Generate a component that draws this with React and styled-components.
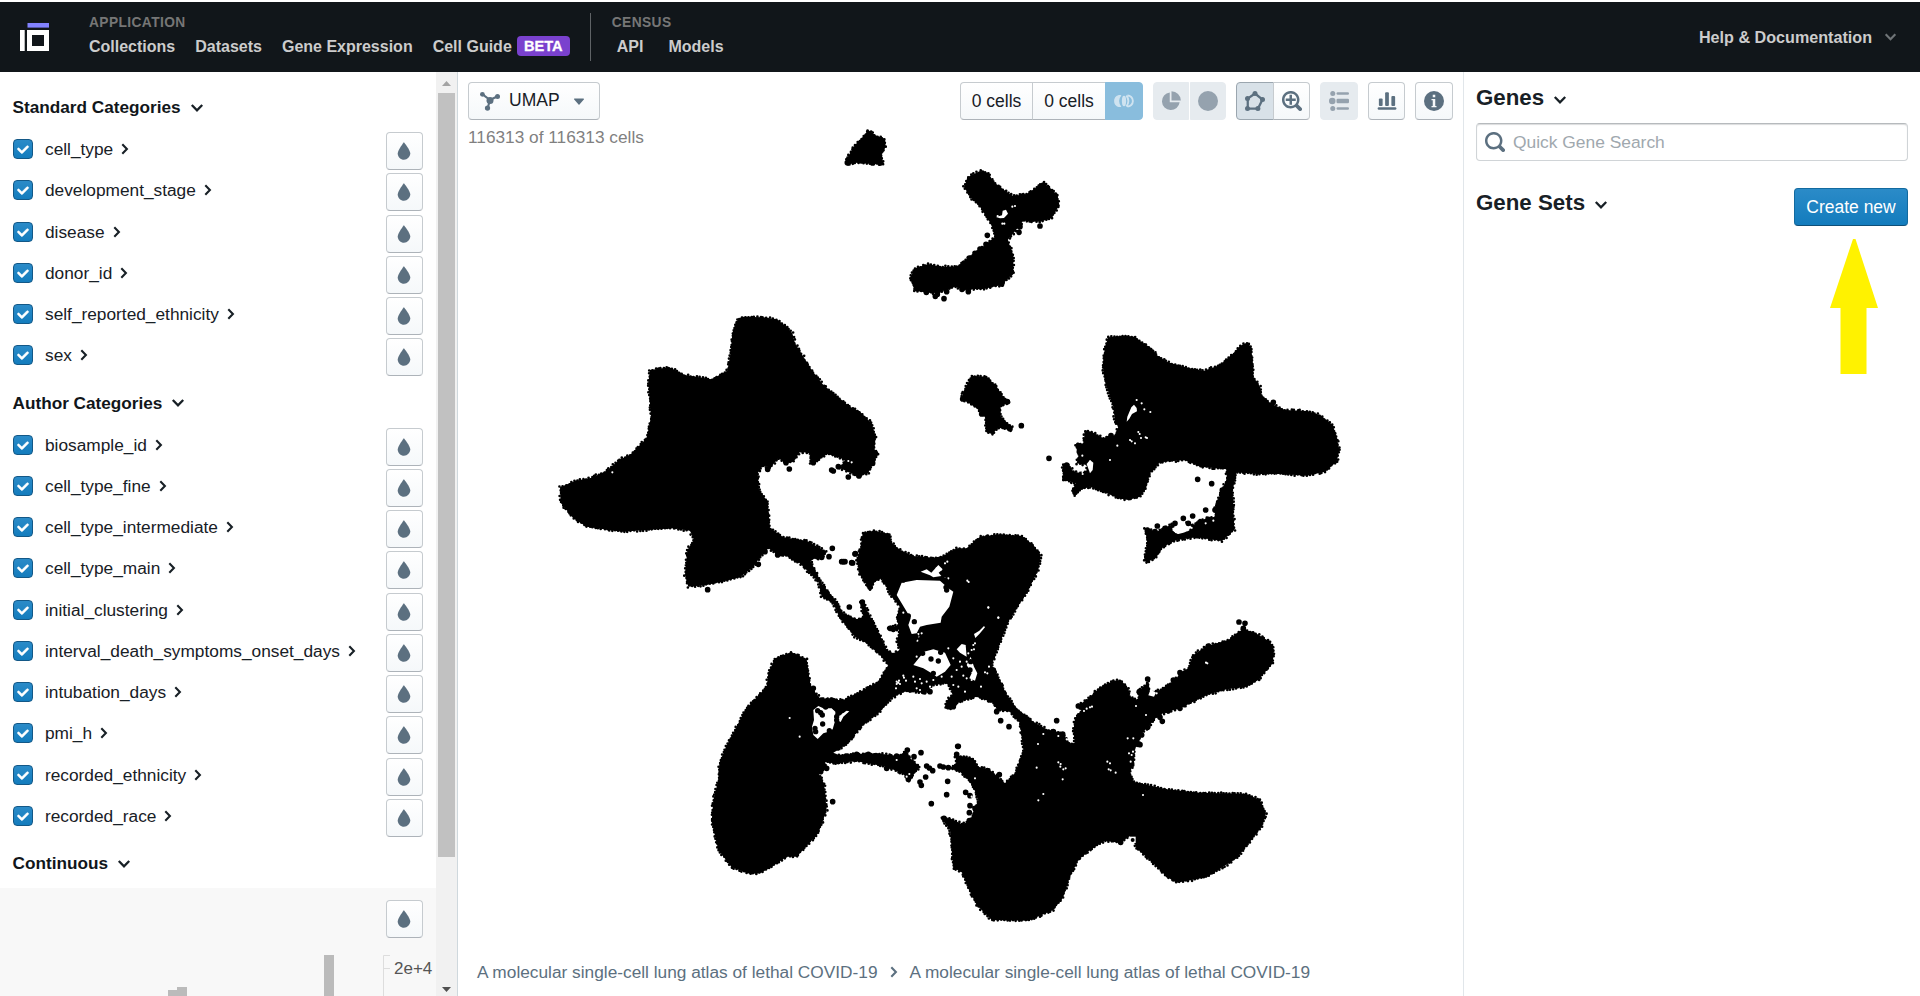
import React from "react";
import styled, { createGlobalStyle, css } from "styled-components";

const GlobalStyle = createGlobalStyle`
  * { box-sizing: border-box; }
  body { margin: 0; background: #fff; overflow: hidden; }
  body, button { font-family: "Liberation Sans", Arial, sans-serif; font-size: 17.5px; color: #182026; }
`;

const Page = styled.div`
  height: 996px;
  padding-top: 2px;
  display: flex;
  flex-direction: column;
`;

/* ---------- header ---------- */
const Header = styled.header`
  height: 70px;
  flex: none;
  background: #11161a;
  display: flex;
  padding-left: 20px;
  padding-right: 23px;
`;
const LogoSvg = styled.svg`
  width: 29px;
  height: 28px;
  margin: 21px 40px 0 0;
`;
const NavSection = styled.div`
  display: flex;
  flex-direction: column;
  padding-top: 13px;
`;
const NavTitle = styled.div`
  font-size: 13.75px;
  line-height: 16px;
  font-weight: 700;
  letter-spacing: 0.4px;
  color: #767676;
`;
const NavLinks = styled.div`
  display: flex;
  align-items: center;
  gap: ${(p) => p.$gap || 20}px;
  padding-left: ${(p) => p.$indent || 0}px;
  margin-top: 6px;
  height: 20px;
`;
const NavLink = styled.a`
  font-size: 16px;
  line-height: 20px;
  font-weight: 700;
  color: #ccc;
  white-space: nowrap;
  display: flex;
  align-items: center;
`;
const Beta = styled.span`
  margin: -2px 0 0 5px;
  width: 53px;
  height: 20px;
  border-radius: 4px;
  background: #7a41ce;
  color: #fff;
  font-size: 14.6px;
  line-height: 20px;
  -webkit-text-stroke: 0.3px #fff;
  text-align: center;
`;
const NavDivider = styled.div`
  width: 1px;
  height: 48px;
  margin: 11px 21px 0 20px;
  background: #5f6366;
`;
const Help = styled.div`
  margin-left: auto;
  display: flex;
  align-items: center;
  gap: 12px;
  height: 70px;
  font-size: 16.15px;
  font-weight: 700;
  color: #ccc;
`;

/* ---------- body ---------- */
const Body = styled.div`
  flex: 1;
  min-height: 0;
  display: flex;
`;
const Sidebar = styled.aside`
  width: 436px;
  flex: none;
  overflow: hidden;
  padding-top: 12px;
`;
const SectionTitle = styled.h2`
  margin: 0;
  height: 48px;
  padding: 0 0 1px 12.5px;
  display: flex;
  align-items: center;
  gap: 9px;
  font-size: 17.2px;
  font-weight: 700;
  color: #11161a;
`;
const Row = styled.div`
  height: 41.25px;
  padding: 0 13px;
  display: flex;
  align-items: flex-start;
`;
const Checkbox = styled.span`
  width: 20px;
  height: 20px;
  margin: 7px 12px 0 0;
  border-radius: 4px;
  border: 1px solid #135887;
  background: linear-gradient(#2b8bc8, #137cbd);
  display: flex;
  align-items: center;
  justify-content: center;
`;
const RowLabel = styled.span`
  line-height: 34px;
  flex: 1;
  display: flex;
  align-items: center;
  gap: 8px;
  font-size: 17.3px;
`;
const buttonFace = css`
  border: 1px solid #c6cbcf;
  border-bottom-color: #adb3b9;
  background: linear-gradient(#ffffff, #f5f8fa);
`;
const Button = styled.button`
  height: 38px;
  width: ${(p) => p.$w || 38}px;
  padding: 0;
  margin: 0;
  border-radius: 4px;
  display: flex;
  align-items: center;
  justify-content: center;
  color: #182026;
  ${buttonFace}
  ${(p) => p.$active && css`background: #d8e1e8; border-color: #9ba6af;`}
  ${(p) => p.$disabled && css`background: #e6ebef; border-color: #e6ebef;`}
  ${(p) => p.$primaryOff && css`background: #89bddd; border-color: #89bddd;`}
`;
const ColorByButton = styled(Button)`
  width: 37px;
  padding-right: 1px;
`;
const Group = styled.div`
  display: flex;
  & > button + button { border-top-left-radius: 0; border-bottom-left-radius: 0; margin-left: ${(p) => p.$overlap ?? -1}px; }
  & > button:not(:last-child) { border-top-right-radius: 0; border-bottom-right-radius: 0; }
`;
const Histogram = styled.div`
  height: 108px;
  background: #f8f8f8;
  padding: 12px 0 0;
  display: flex;
  flex-direction: column;
`;
const HistogramTools = styled.div`
  display: flex;
  justify-content: flex-end;
  padding-right: 13px;
`;
const HistogramSvg = styled.svg`
  display: block;
  width: 436px;
  height: 58px;
`;
const ScrollTrack = styled.div`
  width: 21px;
  flex: none;
  background: #f1f1f1;
  display: flex;
  flex-direction: column;
  align-items: center;
  justify-content: space-between;
`;
const ScrollThumb = styled.div`
  width: 17px;
  height: 764px;
  background: #c1c1c1;
`;
const ScrollArrow = styled.svg`
  width: 17px;
  height: ${(p) => p.$h}px;
  flex: none;
`;
const Main = styled.main`
  width: 1007px;
  flex: none;
  position: relative;
  border-left: 1px solid #cfd8dd;
  border-right: 1px solid #e1e6ea;
  display: flex;
  flex-direction: column;
`;
const Plot = styled.svg`
  position: absolute;
  inset: 0;
  width: 1005px;
  height: 924px;
`;
const Toolbar = styled.div`
  display: flex;
  gap: 10px;
  padding: 10px 10px 0 10px;
`;
const LayoutButton = styled(Button)`
  width: 132px;
  margin-right: auto;
  justify-content: flex-start;
  padding: 0 0 1px 11px;
  & > span { margin: 0 9px 1px 9px; }
`;
const CellCount = styled.div`
  padding: 7px 0 0 10px;
  line-height: 20px;
  font-size: 17.25px;
  color: #808080;
`;
const Breadcrumbs = styled.nav`
  margin-top: auto;
  padding: 0 0 13px 19px;
  display: flex;
  align-items: center;
  gap: 12px;
  line-height: 22px;
  font-size: 17.3px;
  color: #5c7080;
`;
const GenePanel = styled.aside`
  flex: 1;
  padding: 13px 12px 0 12px;
`;
const PanelTitle = styled.h1`
  margin: 0;
  display: flex;
  align-items: center;
  gap: 9px;
  font-size: 22.3px;
  line-height: 26px;
  font-weight: 700;
  color: #182026;
  & > svg { margin-top: 3px; }
`;
const SearchBox = styled.div`
  margin-top: 12px;
  height: 38px;
  border: 1px solid #d0d4d7;
  border-top-color: #b6babd;
  border-radius: 4px;
  box-shadow: inset 0 1px 1px rgba(16, 22, 26, 0.15);
  display: flex;
  align-items: center;
  gap: 8px;
  padding-left: 8px;
  color: #a0a8ae;
  font-size: 17.4px;
`;
const GeneSetsRow = styled.div`
  margin-top: 27px;
  display: flex;
  justify-content: space-between;
  align-items: flex-start;
  height: 38px;
  & > h1 { padding-top: 2px; }
`;
const CreateButton = styled(Button)`
  width: 114px;
  color: #fff;
  background: linear-gradient(#2b8bc8, #137cbd);
  border-color: #136a9f;
  border-bottom-color: #0f4f78;
  font-size: 17.5px;
`;
const ArrowRow = styled.div`
  display: flex;
  justify-content: flex-end;
  padding: 13px 30px 0 0;
`;

/* ---------- icons ---------- */
const Glyph = ({ children, size = 20, color = "#5c7080" }) => (
  <svg width={size} height={size} viewBox="0 0 16 16" fill={color}>{children}</svg>
);
const Drop = () => (
  <Glyph><path d="M7.88 1s-4.9 6.28-4.9 8.9c.01 2.82 2.34 5.1 4.99 5.1 2.65-.01 5.03-2.3 5.03-5.13C12.99 7.17 7.88 1 7.88 1z" /></Glyph>
);
const Tick = () => (
  <Glyph size={20} color="#fff"><path d="M12 5c-.28 0-.53.11-.71.29L7 9.59l-2.29-2.3a1.003 1.003 0 00-1.42 1.42l3 3c.18.18.43.29.71.29s.53-.11.71-.29l5-5A1.003 1.003 0 0012 5z" stroke="#fff" strokeWidth=".4" /></Glyph>
);
const ChevronRight = ({ color = "#182026" }) => (
  <svg width="8" height="12" viewBox="0 0 8 12" fill="none" stroke={color} strokeWidth="2.1"><path d="M1.3 1.3L5.9 6L1.3 10.7" /></svg>
);
const ChevronDown = ({ color = "#182026", w = 14 }) => (
  <svg width={w} height="10" viewBox="0 0 14 10" fill="none" stroke={color} strokeWidth="2.3"><path d="M1.8 2L7 7.3L12.2 2" /></svg>
);
const Caret = () => (
  <Glyph><path d="M12 6.5c0-.28-.22-.5-.5-.5h-7a.495.495 0 00-.37.83l3.5 4c.09.1.22.17.37.17s.28-.07.37-.17l3.5-4c.08-.09.13-.2.13-.33z" /></Glyph>
);
const GraphIcon = () => (
  <Glyph>
    <path d="M1.8 2.5L8 7.2M14 4.2L8 7.2M6.1 13.8L8 7.2" stroke="#5c7080" strokeWidth="1.7" />
    <circle cx="1.9" cy="2.6" r="1.9" /><circle cx="14" cy="4.4" r="2" /><circle cx="6" cy="13.6" r="2.1" /><circle cx="8" cy="7.6" r="2.8" />
  </Glyph>
);
const Intersect = () => (
  <Glyph color="none">
    <path d="M5.9 3.5C4 2.500.1 4 .1 8s3.900 5.500 5.800 4.500A6.500 6.500 0 015.900 3.500z" fill="#cfe3f0" />
    <ellipse cx="8" cy="8" rx="1.700" ry="4.200" fill="#cfe3f0" />
    <path d="M9.800 3.700a6.300 6.300 0 010 8.600M10.800 3.600c2.200 0 4.300 1.700 4.300 4.400s-2.100 4.400-4.300 4.400" stroke="#cfe3f0" strokeWidth="1.500" />
  </Glyph>
);
const PieIcon = () => (
  <Glyph color="#95a2ae"><path d="M7 1.1A7.1 7.1 0 1014.9 9H7z" /><path d="M8.4 0.2V7.6H15.9A7.5 7.5 0 008.4.2z" /></Glyph>
);
const CircleIcon = () => <Glyph color="#95a2ae"><circle cx="8" cy="8" r="8" /></Glyph>;
const LassoIcon = () => (
  <Glyph>
    <path d="M8 2L14 6.8L10.4 14H2.2V6z" fill="none" stroke="#5c7080" strokeWidth="1.8" />
    <circle cx="8" cy="2" r="2" /><circle cx="14" cy="6.8" r="2" /><circle cx="10.3" cy="14" r="2" /><circle cx="2" cy="14" r="2" /><circle cx="2" cy="6" r="2" />
  </Glyph>
);
const ZoomIcon = () => (
  <Glyph>
    <path d="M15.55 13.43l-2.67-2.68a6.94 6.94 0 001.11-3.76c0-3.87-3.13-7-7-7s-7 3.13-7 7 3.13 7 7 7c1.39 0 2.68-.42 3.76-1.11l2.68 2.67a1.498 1.498 0 102.12-2.12zm-8.56-1.44c-2.76 0-5-2.24-5-5s2.24-5 5-5 5 2.24 5 5-2.24 5-5 5z" />
    <path d="M6 3h2v3h3v2H8v3H6V8H3V6h3z" />
  </Glyph>
);
const SearchIcon = () => (
  <Glyph><path d="M15.55 13.43l-2.67-2.68a6.94 6.94 0 001.11-3.76c0-3.87-3.13-7-7-7s-7 3.13-7 7 3.13 7 7 7c1.39 0 2.68-.42 3.76-1.11l2.68 2.67a1.498 1.498 0 102.12-2.12zm-8.56-1.44c-2.76 0-5-2.24-5-5s2.24-5 5-5 5 2.24 5 5-2.24 5-5 5z" /></Glyph>
);
const LegendIcon = () => (
  <Glyph color="#95a2ae">
    <circle cx="3" cy="2" r="2" /><circle cx="2.6" cy="8" r="2.6" /><circle cx="3" cy="14" r="2" />
    <rect x="6" y="1" width="10" height="2" rx="1" /><rect x="6" y="6.2" width="10" height="3.6" rx="1" /><rect x="6" y="13" width="10" height="2" rx="1" />
  </Glyph>
);
const BarsIcon = () => (
  <Glyph>
    <rect x="1.5" y="6" width="3" height="6" rx=".8" /><rect x="6.5" y="1" width="3" height="11" rx=".8" /><rect x="11.5" y="4" width="3" height="8" rx=".8" /><rect x="0.5" y="13" width="15" height="2" rx="1" />
  </Glyph>
);
const InfoIcon = () => (
  <Glyph>
    <circle cx="8" cy="8" r="8" />
    <path d="M7 3h2v2H7zM6 6.400h3V12h1v1H6v-1h1V7.400H6z" fill="#f7f9fa" />
  </Glyph>
);
const Logo = () => (
  <LogoSvg viewBox="0 0 29 28">
    <rect x="7.5" y="0" width="21.5" height="4.6" fill="#8282ff" />
    <rect x="0" y="7" width="4.7" height="21" fill="#fff" />
    <path d="M7 7h22v21H7zM12 12v11h12V12z" fill="#fff" fillRule="evenodd" />
  </LogoSvg>
);

/* ---------- embedding plot ---------- */
// Each cluster lists outlines, gaps and single cells in thirds of a pixel from its origin.
const clusters = [
  {
    at: [440, 60],
    fill: ["1285,210 1305,225 1335,238 1337,260 1325,285 1330,312 1300,312 1245,308 1222,315 1218,300 1245,255 1265,235"],
    cells: "1222,308 1298,309 1320,309",
  },
  {
    at: [540, 300],
    fill: [
      "60,562 105,543 155,533 200,512 240,478 270,465 320,415 333,350 325,250 330,210 388,202 435,225 515,238 562,212 572,160 577,100 588,65 605,50 670,52 710,58 740,80 757,100 765,130 815,210 850,255 930,320 960,335 995,370 1007,410 1003,450 1015,462 998,492 985,518 955,530 925,515 900,505 915,480 885,468 860,462 830,485 812,492 810,460 780,455 760,485 740,490 715,475 690,505 670,495 653,520 657,570 683,605 690,685 730,712 800,722 860,755 845,775 810,778 790,790 765,785 740,768 715,765 685,745 665,765 640,800 600,832 545,845 500,855 445,860 435,825 442,750 462,720 450,692 400,685 245,695 140,680 100,655 62,608",
    ],
    cells: "503,869 655,793 877,745 867,770 905,785 915,785 935,788 748,507 875,510 880,513 925,531 957,528 945,762 683,508 675,755 668,493 1006,460 998,490 820,488 738,488 895,500 845,772 713,765",
    gaps: "925,483 935,487 217,517",
  },
  {
    at: [880, 110],
    fill: [
      "300,183 325,188 340,215 385,250 400,258 440,252 490,218 515,238 533,258 538,285 515,325 480,335 430,332 400,370 383,390 400,435 400,490 365,525 310,537 245,538 225,530 200,540 160,550 105,543 90,505 105,475 145,462 180,470 230,470 270,440 315,405 345,380 335,345 300,290 270,260 252,230 265,200",
      "275,797 320,800 350,830 370,860 388,875 362,890 362,920 395,950 390,962 360,950 335,972 318,965 315,920 290,895 265,878 245,868 250,845",
    ],
    cells: "322,376 420,350 417,367 480,348 192,566 166,559 172,553 200,545 265,545 246,538 139,547 424,947 305,912 382,875 390,956 248,867 490,225 525,257 252,460 268,444 285,430 300,417 318,403 427,258 393,487 365,522",
    holes: ["348,321 366,316 368,302 378,299 384,311 372,324 360,325"],
    gaps: "397,290 405,288 367,341 373,341 353,318",
  },
  {
    at: [1040, 310],
    fill: [
      "205,82 255,77 285,80 305,97 335,115 350,135 380,155 430,170 490,183 540,165 580,130 600,108 620,98 633,110 640,170 640,200 660,230 665,255 690,280 735,300 800,303 840,315 878,345 890,380 898,420 890,455 855,485 800,497 720,492 650,492 590,487 578,540 580,600 583,660 545,693 470,682 410,690 370,710 350,740 320,758 312,750 322,700 315,655 350,665 380,650 405,640 395,660 410,672 440,665 460,655 440,635 460,645 480,632 500,625 525,620 525,595 545,540 560,510 560,478 480,470 435,450 360,457 330,490 318,535 300,560 265,570 235,565 190,545 150,530 120,540 105,555 95,540 110,520 70,510 68,465 85,462 100,485 130,490 142,480 140,465 110,460 118,425 105,405 130,400 135,365 155,365 190,385 225,375 235,350 225,335 220,290 195,215 188,165 195,110",
    ],
    cells: "27,445 700,277 473,508 515,521 497,600 458,618 430,625 352,648 322,660 405,640 445,640 547,540 536,577 505,628 480,636 213,377 115,407 80,465 105,547 75,480 75,505 118,425 142,370 525,600 345,665 375,655",
    holes: ["274,292 282,284 290,294 291,304 276,312 268,326 260,335 262,320", "398,655 412,655 425,640 440,655 445,662 430,668 415,672 402,665", "140,462 150,450 160,458 158,480 150,490"],
    gaps: "317,382 321,384 270,390 275,394 232,407 295,366 299,372 210,450 290,270 305,280 313,298 331,306 127,437 150,455 120,482 128,492 285,400 303,384 520,632 497,640",
  },
  {
    at: [700, 510],
    fill: [
      "470,150 482,110 488,70 520,62 570,72 572,95 600,120 640,138 700,143 730,138 770,115 800,115 840,80 900,73 965,78 1000,105 1022,135 1015,180 985,240 925,335 895,410 875,465 885,485 905,520 920,560 890,590 880,578 830,560 780,575 750,595 735,590 740,572 760,550 740,520 700,525 675,550 640,545 610,545 575,565 540,605 490,645 450,690 415,720 380,745 300,740 330,650 400,660 415,640 400,610 410,590 385,570 430,570 490,540 535,515 565,465 540,435 500,400 465,380 440,350 415,315 400,280 365,260 355,215 310,170 290,150 330,150 365,220 410,275 430,310 470,328 490,320 482,275 490,272 505,310 530,355 560,420 580,430 600,420 590,395 600,360 565,355 595,345 590,320 600,290 575,260 545,205 525,215 510,238 480,195",
    ],
    cells: "448,291 487,276 466,131 458,159 510,231 430,155 690,545 672,545 630,540 605,540 880,480 745,590 760,590 570,355 580,358",
    holes: [
      "605,218 650,210 720,212 745,235 760,245 748,290 725,320 722,338 680,345 660,350 650,370 635,372 625,345 632,325 605,280 590,255",
      "640,465 660,440 672,425 700,418 735,428 752,465 735,485 710,500 695,490 670,475",
      "800,465 812,440 822,470 832,490 825,512 808,505 815,490",
      "662,185 680,178 694,188 715,165 728,178 716,188 724,198 700,202 690,196 680,192",
      "822,372 838,362 852,348 855,352 838,372 826,384",
      "412,630 422,615 440,602 448,604 430,620 422,636",
      "770,418 785,402 797,405 800,440 780,428",
    ],
    gaps: "802,212 806,216 865,293 895,323 710,175 722,180 735,160 742,155 735,205 745,205 590,515 597,512 600,522 588,535 610,497 625,550 660,507 665,520 680,515 650,535 690,530 760,525 775,530 770,480 785,470 800,505 815,510 805,430 815,420 755,500 725,500 650,440 640,330 610,308 855,487 867,470 825,400 843,530 660,540 745,415 760,445 780,455 640,500 862,490 700,510 655,380 665,370 795,545 655,372 652,392 612,503 618,512 645,515 590,522 595,518 820,405 822,418 790,497 800,455",
    inner: "693,447 715,453 643,335 668,430 738,232 610,210 735,210 740,240 722,427 648,380 700,490 625,318 645,385 812,455 810,480",
  },
  {
    at: [690, 620],
    fill: [
      "305,97 350,118 362,200 390,235 440,240 470,300 440,340 490,350 455,380 440,395 430,430 405,425 410,445 385,460 402,490 410,570 385,640 320,710 290,710 245,740 210,760 180,762 125,742 85,690 65,605 70,540 85,480 88,430 108,380 135,330 165,270 230,200 235,160 255,115",
      "430,405 500,402 560,400 625,408 648,392 660,415 690,440 670,465 655,482 640,462 590,440 500,424 430,430",
    ],
    holes: ["370,270 385,258 400,265 425,265 436,275 436,300 428,328 415,335 400,340 383,357 370,345 366,320 372,300", "440,392 455,392 440,402 430,398"],
    inner: "407,261 383,272 392,278 397,285 398,312 375,325 377,335 418,332 440,290 440,300 432,250 435,262",
    cells: "652,390 693,398 672,410 620,408 648,408 590,445 710,438 718,444 728,452 750,438 760,441 707,471 690,486 694,496 773,484 770,524 724,551 428,545 805,379 803,379 827,517 840,527 838,578 410,445 840,557 855,565 392,455 370,205 395,240 425,240 470,408 500,403 535,403 560,408 445,425 655,478",
    gaps: "299,294 329,350 446,300 450,290 460,282 470,276 658,462 650,470 620,420",
  },
  {
    at: [900, 600],
    fill: [
      "240,215 285,215 300,250 320,285 350,325 400,365 440,388 490,400 505,430 525,430 520,395 525,355 545,330 530,318 560,300 600,262 640,242 662,240 685,265 690,290 715,300 715,275 745,245 750,275 775,272 825,240 845,215 865,205 880,165 920,138 985,120 1025,90 1060,95 1110,125 1122,150 1118,190 1075,240 1040,260 980,268 920,285 850,320 805,335 775,345 745,380 725,400 715,435 705,445 700,495 690,515 700,545 800,568 900,578 1040,582 1080,600 1098,640 1085,680 1050,725 1010,775 920,832 830,848 800,830 755,785 710,745 700,720 690,708 660,728 615,722 570,750 535,780 510,830 490,890 460,930 385,962 275,960 230,915 205,865 185,815 160,805 150,690 125,655 150,655 185,672 210,665 222,630 235,600 220,560 205,540 180,515 150,505 170,490 165,465 220,475 235,500 270,510 315,550 345,520 370,450 360,370 330,335 290,330 285,310 240,290",
    ],
    cells: "302,362 327,380 470,362 1017,66 1035,70 1030,85 743,237 787,364 780,352 145,503 298,524 262,512 230,630 208,662 132,655 290,335 720,434 725,405 743,382 535,318 718,275 840,218 175,505 805,332 925,138 662,727 170,463 820,240 840,325 460,395 488,402 695,492",
    gaps: "570,322 576,320 560,326 552,333 475,487 482,492 497,505 490,508 481,500 488,538 622,485 630,490 626,508 632,511 647,518 695,465 687,460 699,455 410,503 414,432 430,402 918,188 922,190 430,582 415,601 729,585 738,345 683,415 700,415 692,485 755,282 770,280 708,318 475,408 500,418 215,590 225,535 198,545 265,22 295,53",
    holes: ["688,710 707,710 707,729 688,729", "752,268 768,278 762,290 745,286"],
    inner: "698,720",
  },
];

const parse = (text) => text.trim().split(" ").map((pair) => pair.split(",").map(Number));
const seeded = (seed) => () => {
  seed = (seed * 16807) % 2147483647;
  return seed / 2147483647;
};
function fringe(outline, random, step = 9) {
  const points = parse(outline);
  const out = [];
  points.forEach(([x1, y1], i) => {
    const [x2, y2] = points[(i + 1) % points.length];
    const n = Math.max(1, Math.round(Math.hypot(x2 - x1, y2 - y1) / step));
    for (let k = 0; k < n; k++) {
      out.push([x1 + ((x2 - x1) * k) / n + (random() - 0.5) * 5, y1 + ((y2 - y1) * k) / n + (random() - 0.5) * 5]);
    }
  });
  return out;
}
const dots = (points, r) =>
  points.map(([x, y]) => `M${(x - r).toFixed(1)} ${y.toFixed(1)}a${r} ${r} 0 1 0 ${2 * r} 0a${r} ${r} 0 1 0 ${-2 * r} 0`).join("");

function Embedding() {
  const random = seeded(4211);
  const place = ([x, y]) => `translate(${x} ${y}) scale(0.33333)`;
  return (
    <Plot viewBox="458 72 1005 924">
      {clusters.map((c, i) => (
        <g key={i} transform={place(c.at)}>
          {c.fill.map((o, k) => <polygon key={k} points={o} />)}
          <path d={c.fill.map((o) => dots(fringe(o, random), 4)).join("")} />
          <path d={dots(parse(c.cells), 8.5)} />
        </g>
      ))}
      {clusters.map((c, i) => (
        <g key={i} transform={place(c.at)}>
          {(c.holes || []).map((o, k) => <polygon key={k} points={o} fill="#fff" />)}
          {c.gaps && <path d={dots(parse(c.gaps), 3.2)} fill="#fff" />}
          {c.inner && <path d={dots(parse(c.inner), i === clusters.length - 1 ? 6 : 8)} />}
        </g>
      ))}
    </Plot>
  );
}

const standard = ["cell_type", "development_stage", "disease", "donor_id", "self_reported_ethnicity", "sex"];
const author = ["biosample_id", "cell_type_fine", "cell_type_intermediate", "cell_type_main", "initial_clustering", "interval_death_symptoms_onset_days", "intubation_days", "pmi_h", "recorded_ethnicity", "recorded_race"];

const Category = ({ name }) => (
  <Row>
    <Checkbox><Tick /></Checkbox>
    <RowLabel>{name}<ChevronRight /></RowLabel>
    <ColorByButton><Drop /></ColorByButton>
  </Row>
);

export default function App() {
  return (
    <Page>
      <GlobalStyle />
      <Header>
        <Logo />
        <NavSection>
          <NavTitle>APPLICATION</NavTitle>
          <NavLinks>
            <NavLink>Collections</NavLink>
            <NavLink>Datasets</NavLink>
            <NavLink>Gene Expression</NavLink>
            <NavLink>Cell Guide<Beta>BETA</Beta></NavLink>
          </NavLinks>
        </NavSection>
        <NavDivider />
        <NavSection>
          <NavTitle>CENSUS</NavTitle>
          <NavLinks $gap={25} $indent={5}>
            <NavLink>API</NavLink>
            <NavLink>Models</NavLink>
          </NavLinks>
        </NavSection>
        <Help>Help &amp; Documentation<ChevronDown color="#6f7477" w={13} /></Help>
      </Header>
      <Body>
        <Sidebar>
          <SectionTitle>Standard Categories<ChevronDown /></SectionTitle>
          {standard.map((n) => <Category key={n} name={n} />)}
          <SectionTitle>Author Categories<ChevronDown /></SectionTitle>
          {author.map((n) => <Category key={n} name={n} />)}
          <SectionTitle>Continuous<ChevronDown /></SectionTitle>
          <Histogram>
            <HistogramTools><ColorByButton><Drop /></ColorByButton></HistogramTools>
            <HistogramSvg viewBox="0 0 436 58">
              <g fill="#bbb">
                <rect x="324" y="17" width="10" height="41" />
                <rect x="168" y="52" width="10" height="6" />
                <rect x="177" y="49" width="10" height="9" />
              </g>
              <path d="M390 17.5H383.5V58M383.5 30.5H390" fill="none" stroke="#ddd" />
              <text x="394" y="35.5" fontSize="17" fill="#555">2e+4</text>
            </HistogramSvg>
          </Histogram>
        </Sidebar>
        <ScrollTrack>
          <ScrollArrow $h={21} viewBox="0 0 17 21"><path d="M4 14L8.5 9L13 14z" fill="#a3a3a3" /></ScrollArrow>
          <ScrollThumb />
          <ScrollArrow $h={139} viewBox="0 0 17 139"><path d="M4 130L8.5 135L13 130z" fill="#505050" /></ScrollArrow>
        </ScrollTrack>
        <Main>
          <Embedding />
          <Toolbar>
            <LayoutButton><GraphIcon /><span>UMAP</span><Caret /></LayoutButton>
            <Group>
              <Button $w={73}>0 cells</Button>
              <Button $w={74}>0 cells</Button>
              <Button $primaryOff><Intersect /></Button>
            </Group>
            <Group $overlap={1}>
              <Button $w={36} $disabled><PieIcon /></Button>
              <Button $w={36} $disabled><CircleIcon /></Button>
            </Group>
            <Group>
              <Button $active><LassoIcon /></Button>
              <Button $w={37}><ZoomIcon /></Button>
            </Group>
            <Button $disabled><LegendIcon /></Button>
            <Button $w={37}><BarsIcon /></Button>
            <Button><InfoIcon /></Button>
          </Toolbar>
          <CellCount>116313 of 116313 cells</CellCount>
          <Breadcrumbs>
            <span>A molecular single-cell lung atlas of lethal COVID-19</span>
            <ChevronRight color="#5c7080" />
            <span>A molecular single-cell lung atlas of lethal COVID-19</span>
          </Breadcrumbs>
        </Main>
        <GenePanel>
          <PanelTitle>Genes<ChevronDown /></PanelTitle>
          <SearchBox><SearchIcon />Quick Gene Search</SearchBox>
          <GeneSetsRow>
            <PanelTitle>Gene Sets<ChevronDown /></PanelTitle>
            <CreateButton>Create new</CreateButton>
          </GeneSetsRow>
          <ArrowRow>
            <svg width="48" height="135" viewBox="0 0 48 135" fill="#fff200"><path d="M23 0h2.5L48 69H36.5V135H10.5V69H0z" /></svg>
          </ArrowRow>
        </GenePanel>
      </Body>
    </Page>
  );
}
